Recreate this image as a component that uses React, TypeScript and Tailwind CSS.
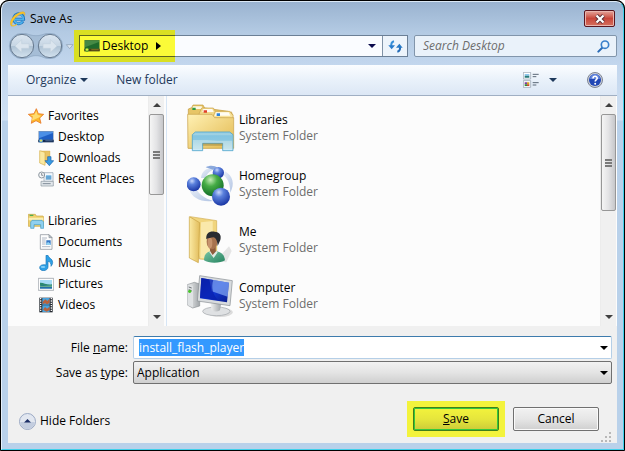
import { useEffect, useRef, type ReactNode } from "react";

function IeIcon() {
  return (
    <svg viewBox="0 0 48 48" className="h-4 w-4 shrink-0">
      <path d="M39 31a15 15 0 1 1 2-6H15" fill="none" stroke="#1f78c2" strokeWidth="9" />
      <path d="M38 31a14 14 0 1 1 2-6H15" fill="none" stroke="#4fb2ec" strokeWidth="5" />
      <path d="M5 46C-6 36 8 12 30 4c12-4 18 0 13 10 1-6-4-7-12-4C17 16 4 33 5 46z" fill="#f9c62c" stroke="#dd9a12" />
      <path d="M4 41c3 7 10 4 17-1C14 45 8 46 4 41z" fill="#f6c22d" stroke="#f6c22d" strokeWidth="2" />
    </svg>
  );
}

function ScreenIcon({ green }: { green?: boolean }) {
  return (
    <svg viewBox="0 0 48 48" className="h-4 w-4 shrink-0">
      <path d="M1 6h46v34H1z" fill={green ? "#5f8a3a" : "#8fa3bb"} />
      <path d="M3 8h42v24H3z" fill={green ? "#1f6a2c" : "#1f5fc4"} />
      <path d="M3 8h42v4L3 28z" fill={green ? "#468a45" : "#4b8fe6"} />
      <path d="M1 32h46v8H1z" fill={green ? "#4d3f14" : "#12294f"} />
      <path d="M22 34h22v3H22z" fill={green ? "#8d7a22" : "#4a6b9a"} />
      <circle cx="9" cy="35" r="6" fill={green ? "#3f9a2a" : "#3d8fe0"} />
      <path d="M9 31v8M5 35h8" stroke={green ? "#e8f04a" : "#e9e25a"} strokeWidth="3" />
    </svg>
  );
}

function StarIcon() {
  return (
    <svg viewBox="0 0 48 48" className="h-4 w-4 shrink-0">
      <path d="M25 2l6 15 16 2-12 11 4 16-15-8-14 8 3-17L1 19l17-2z" fill="#fbb829" stroke="#e8792a" strokeWidth="2.5" strokeLinejoin="round" />
      <path d="M25 9l4 12 11 2-9 6-20 9 4-13-8-4 12-1z" fill="#ffdc70" />
    </svg>
  );
}

function DownloadsIcon() {
  return (
    <svg viewBox="0 0 48 48" className="h-4 w-4 shrink-0">
      <path d="M8 3h28v35H8z" fill="#e9c565" stroke="#cfa544" />
      <path d="M5 2l16 5v39L5 39z" fill="#fae9a0" stroke="#d6b04e" strokeWidth="2" />
      <path d="M29 20h10v12h8L34 47 21 32h8z" fill="#3a9be3" stroke="#1a63ad" strokeWidth="2" />
    </svg>
  );
}

function RecentIcon() {
  return (
    <svg viewBox="0 0 48 48" className="h-4 w-4 shrink-0">
      <path d="M18 5h27v26H18z" fill="#f3f8fc" stroke="#8b9aaa" strokeWidth="2" />
      <path d="M24 12h16v12H24z" fill="#8fc7ee" />
      <path d="M23 18h17M23 24h17" stroke="#3d86bd" strokeWidth="3" />
      <path d="M9 31h37v14H9z" fill="#e2e7eb" stroke="#8a949e" strokeWidth="2" />
      <path d="M14 38h24" stroke="#7e8b97" strokeWidth="3" />
      <circle cx="11" cy="12" r="9" fill="#f4f6f8" stroke="#8d979f" strokeWidth="3" />
      <path d="M11 6v7h5" fill="none" stroke="#56616b" strokeWidth="2" />
    </svg>
  );
}

function LibrarySmallIcon() {
  return (
    <svg viewBox="0 0 48 48" className="h-4 w-4 shrink-0">
      <path d="M1 4h21l3 5h20l2 3v28H1z" fill="#efd06c" stroke="#c9a443" strokeWidth="2" />
      <path d="M5 5h11v4H5z" fill="#4caf50" />
      <path d="M2 14h44v8H2z" fill="#fbeeb0" />
      <path d="M8 27l4-5h30l5 5v19h-9V35H18v11H8z" fill="#8fd0f0" stroke="#3f9ac9" strokeWidth="2" />
    </svg>
  );
}

function DocumentIcon() {
  return (
    <svg viewBox="0 0 48 48" className="h-4 w-4 shrink-0">
      <path d="M7 2h26l9 9v35H7z" fill="#fdfdfd" stroke="#808890" strokeWidth="2" />
      <path d="M33 2v9h9z" fill="#c8d0d8" stroke="#808890" strokeWidth="2" />
      <path d="M12 12h15M12 18h11M12 24h11M12 30h11M12 38h25" stroke="#8b98ab" strokeWidth="2" />
      <path d="M25 19h13v14H25z" fill="#3578c6" />
      <path d="M25 28l6-4 7 6v3H25z" fill="#8ed0f2" />
    </svg>
  );
}

function MusicIcon() {
  return (
    <svg viewBox="0 0 48 48" className="h-4 w-4 shrink-0">
      <path d="M24 1h6c1 9 14 9 14 21 0 6-3 9-5 12 1-9-3-14-9-15v17c0 6-6 11-13 11-7 0-12-4-12-9 0-7 9-11 19-8z" fill="#2da0e6" stroke="#1876b8" strokeWidth="2" />
      <ellipse cx="15" cy="36" rx="7" ry="3" fill="#85d0fa" />
    </svg>
  );
}

function PictureIcon() {
  return (
    <svg viewBox="0 0 48 48" className="h-4 w-4 shrink-0">
      <path d="M1 7h46v36H1z" fill="#fdfdfd" stroke="#8a9198" strokeWidth="2" />
      <path d="M6 12h36v26H6z" fill="#a6dbf5" />
      <path d="M6 20c11-1 20 8 36 5v5H6z" fill="#2c8a70" />
      <path d="M6 29h36v9H6z" fill="#2470a8" />
      <path d="M6 29c12 3 24-1 36 0v3H6z" fill="#79bd82" />
    </svg>
  );
}

function VideoIcon() {
  return (
    <svg viewBox="0 0 48 48" className="h-4 w-4 shrink-0">
      <path d="M4 2h40v44H4z" fill="#252a31" />
      <path d="M8 3v42M40 3v42" stroke="#f4f4f4" strokeWidth="4" strokeDasharray="4 3" />
      <path d="M13 3h22v20H13zM13 25h22v20H13z" fill="#4ba4de" />
      <path d="M14 14l8-7 6 5 7-7v13l-8 4-6-3-7 3zM15 38l6-8 6 5 8-6v10l-9 5z" fill="#b8623c" />
    </svg>
  );
}

function LibrariesIcon() {
  return (
    <svg viewBox="0 0 144 144" className="h-12 w-12 shrink-0">
      <defs>
        <linearGradient id="folder" x1="0" y1="0" x2="1" y2="1">
          <stop offset="0" stopColor="#fff1b4" />
          <stop offset="1" stopColor="#e2b84e" />
        </linearGradient>
        <linearGradient id="stand" x1="0" y1="0" x2="0" y2="1">
          <stop offset="0" stopColor="#8fcdea" />
          <stop offset="1" stopColor="#cbeaf8" />
        </linearGradient>
      </defs>
      <path d="M4 132V15l10-4 4-8h30l5 9 70 10 14 8v102z" fill="#e7c566" stroke="#c39a3e" strokeWidth="2" />
      <path d="M18 7h26l4 8H16z" fill="#fdf8e2" />
      <path d="M16 11h10v7H16z" fill="#2d9a40" />
      <path d="M36 30l8-18h35l7 12h48v20H36z" fill="#f2d98a" stroke="#c8a14a" strokeWidth="2" />
      <path d="M49 15h27l4 9H46z" fill="#fffaf0" />
      <path d="M50 19h10v7H50z" fill="#e0402a" />
      <path d="M76 42l9-20h43l10 12v10z" fill="#f7e29a" stroke="#c8a14a" strokeWidth="2" />
      <path d="M87 25h38l5 10H83z" fill="#fffdf5" />
      <path d="M89 28h10v8H89z" fill="#2f84d8" />
      <path d="M2 31h73l8 10h57v92H3z" fill="url(#folder)" stroke="#c8a14a" strokeWidth="2" />
      <path d="M16 92l9-8h103l10 8v48h-31v-22H47v22H16z" fill="url(#stand)" fillOpacity=".92" stroke="#4fa5cb" strokeWidth="2.5" />
      <path d="M18 94h118v16H90L60 108H18z" fill="#6bb9df" opacity=".55" />
      <path d="M47 118h60v7H47z" fill="#8a7a3c" opacity=".45" />
    </svg>
  );
}

function HomegroupIcon() {
  return (
    <svg viewBox="0 0 144 144" className="h-12 w-12 shrink-0">
      <defs>
        <radialGradient id="blueBall" cx=".38" cy=".26" r=".75">
          <stop offset="0" stopColor="#c9d8fb" />
          <stop offset=".35" stopColor="#5a80dc" />
          <stop offset="1" stopColor="#1a36a4" />
        </radialGradient>
        <radialGradient id="greenBall" cx=".4" cy=".25" r=".75">
          <stop offset="0" stopColor="#c4ecb6" />
          <stop offset=".4" stopColor="#45ac45" />
          <stop offset="1" stopColor="#126c28" />
        </radialGradient>
        <linearGradient id="trail" x1="0" y1="0" x2="1" y2="1">
          <stop offset="0" stopColor="#e9eff8" />
          <stop offset="1" stopColor="#b3c5e4" />
        </linearGradient>
      </defs>
      <path d="M7 90c8 22 34 38 71 33-26-8-43-20-50-38z" fill="url(#trail)" />
      <path d="M114 34c24 14 30 38 16 64-1-22-4-38-20-52z" fill="url(#trail)" />
      <path d="M42 54C44 32 60 20 92 24 72 30 60 38 56 54z" fill="url(#trail)" />
      <path d="M56 22C70 14 84 17 92 24l-14 5z" fill="#8ba9dc" />
      <circle cx="94" cy="38" r="17" fill="url(#blueBall)" />
      <circle cx="20" cy="73" r="21" fill="url(#blueBall)" />
      <circle cx="77" cy="76" r="33" fill="url(#greenBall)" />
      <circle cx="102" cy="110" r="27" fill="url(#blueBall)" />
    </svg>
  );
}

function UserFolderIcon() {
  return (
    <svg viewBox="0 0 144 144" className="h-12 w-12 shrink-0">
      <defs>
        <linearGradient id="flap" x1="0" y1="0" x2="1" y2="0">
          <stop offset="0" stopColor="#fbeaa4" />
          <stop offset="1" stopColor="#e2bd5c" />
        </linearGradient>
        <linearGradient id="shirt" x1="0" y1="0" x2="1" y2="1">
          <stop offset="0" stopColor="#79c5a6" />
          <stop offset="1" stopColor="#25835f" />
        </linearGradient>
      </defs>
      <path d="M84 136l42-45 8 14-16 34z" fill="#d6d6d6" opacity=".6" />
      <path d="M10 2l79 12v119l-52-4z" fill="#f1d57d" stroke="#d2ae52" strokeWidth="2" />
      <path d="M42 19l35-4v112H40z" fill="#fae9ab" />
      <path d="M7 2l31 18-4 120-27-14z" fill="url(#flap)" stroke="#c9a143" strokeWidth="2" />
      <path d="M51 133c0-18 8-26 24-28 24-1 37 8 39 28-12 9-50 10-63 0z" fill="url(#shirt)" />
      <path d="M68 92l2 20 8 10 9-10-1-20z" fill="#8f5c3c" />
      <path d="M69 105l8 12 11-12 4 4-12 17-13-17z" fill="#dfeae4" />
      <ellipse cx="75" cy="77" rx="16" ry="23" fill="#a8734e" />
      <ellipse cx="69" cy="81" rx="7" ry="16" fill="#d3a17a" opacity=".7" />
      <path d="M58 70c-2-17 8-25 25-23 15 1 21 11 17 25l-8 18c-1-12-3-22-12-26-9 2-16 1-22 6z" fill="#2a2c31" />
    </svg>
  );
}

function ComputerIcon() {
  return (
    <svg viewBox="0 0 144 144" className="h-12 w-12 shrink-0">
      <defs>
        <linearGradient id="screen" x1="0" y1="0" x2="1" y2="1">
          <stop offset="0" stopColor="#0a1f9e" />
          <stop offset=".5" stopColor="#1038d6" />
          <stop offset="1" stopColor="#0a1d8c" />
        </linearGradient>
        <linearGradient id="metal" x1="0" y1="0" x2="1" y2="0">
          <stop offset="0" stopColor="#f3f3f3" />
          <stop offset="1" stopColor="#9fa4a8" />
        </linearGradient>
      </defs>
      <path d="M1 38l21-7 16 5v66l-21 6-16-9z" fill="url(#metal)" stroke="#8c9196" strokeWidth="2" />
      <path d="M2 38l16 4v64L2 99z" fill="#dfe2e4" />
      <path d="M5 45l9 3M5 53l9 3" stroke="#6d7275" strokeWidth="3" />
      <circle cx="8" cy="58" r="5" fill="#49c32c" />
      <ellipse cx="99" cy="121" rx="38" ry="14" fill="#bcbcbc" opacity=".5" />
      <ellipse cx="88" cy="118" rx="41" ry="13" fill="#dfe1e3" stroke="#a0a5a9" strokeWidth="2" />
      <path d="M70 91h33l-4 24c-8 5-18 5-25 0z" fill="url(#metal)" />
      <path d="M38 11l98 15-7 75-98-14z" fill="#d8dbde" stroke="#878c91" strokeWidth="2" />
      <path d="M43 18l83 14-6 59-81-12z" fill="url(#screen)" />
      <path d="M67 22l59 10-4 42-48-16z" fill="#85a9f4" opacity=".7" />
      <path d="M43 18l36 6c-8 23 0 46 14 61l-54-8z" fill="#0920ad" opacity=".7" />
    </svg>
  );
}

const SIDEBAR = [
  {
    label: "Favorites",
    icon: <StarIcon />,
    items: [
      { label: "Desktop", icon: <ScreenIcon /> },
      { label: "Downloads", icon: <DownloadsIcon /> },
      { label: "Recent Places", icon: <RecentIcon /> },
    ],
  },
  {
    label: "Libraries",
    icon: <LibrarySmallIcon />,
    items: [
      { label: "Documents", icon: <DocumentIcon /> },
      { label: "Music", icon: <MusicIcon /> },
      { label: "Pictures", icon: <PictureIcon /> },
      { label: "Videos", icon: <VideoIcon /> },
    ],
  },
];

const FOLDERS = [
  { name: "Libraries", icon: <LibrariesIcon /> },
  { name: "Homegroup", icon: <HomegroupIcon /> },
  { name: "Me", icon: <UserFolderIcon /> },
  { name: "Computer", icon: <ComputerIcon /> },
];

function Caret({ className = "" }: { className?: string }) {
  return (
    <svg viewBox="0 0 8 4" className={`h-1 w-2 shrink-0 ${className}`}>
      <path d="M0 0h8L4 4z" fill="currentColor" />
    </svg>
  );
}

function Scrollbar({ thumb }: { thumb: string }) {
  return (
    <div className="flex w-4 shrink-0 flex-col items-center border-l border-[#ececec] bg-[#f0f0f0] text-[#404040]">
      <button aria-label="Scroll up" className="flex h-[18px] w-full shrink-0 items-center justify-center">
        <Caret className="rotate-180" />
      </button>
      <div className="min-h-0 w-full flex-1">
        <div className={`flex w-full flex-col items-center justify-center gap-px rounded-xs border border-[#979797] bg-linear-to-r from-[#f5f5f5] via-[#e3e3e5] to-[#c6c7ca] ${thumb}`}>
          <span className="h-0.5 w-[7px] bg-[#7a7a7a]" />
          <span className="h-0.5 w-[7px] bg-[#7a7a7a]" />
          <span className="h-0.5 w-[7px] bg-[#7a7a7a]" />
        </div>
      </div>
      <button aria-label="Scroll down" className="flex h-[18px] w-full shrink-0 items-center justify-center">
        <Caret />
      </button>
    </div>
  );
}

function TitleBar() {
  return (
    <header className="flex h-[25px] items-end justify-between px-0.5">
      <div className="flex items-center gap-1">
        <IeIcon />
        <h1>Save As</h1>
      </div>
      <button
        aria-label="Close"
        className="flex h-[17px] w-[31px] items-center justify-center rounded-xs border border-[#5b1620] bg-linear-to-b from-[#e3a49c] via-[#c8453a] via-50% to-[#d5705f] shadow-[inset_0_0_0_1px_#e9b5ae]"
      >
        <svg viewBox="0 0 12 10" className="h-2.5 w-3">
          <path d="M2.5 1.5l7 7m0-7l-7 7" stroke="#5b3038" strokeWidth="4" />
          <path d="M2.5 1.5l7 7m0-7l-7 7" stroke="#fff" strokeWidth="2.2" />
        </svg>
      </button>
    </header>
  );
}

function NavButtons() {
  return (
    <div className="flex w-[71px] shrink-0 items-center">
      <svg viewBox="0 0 198 78" className="h-[26px] w-[66px]">
        <defs>
          <linearGradient id="orb" x1="0" y1="0" x2="0" y2="1">
            <stop offset="0" stopColor="#dce7f1" />
            <stop offset=".48" stopColor="#c7d6e4" />
            <stop offset=".5" stopColor="#aec2d4" />
            <stop offset="1" stopColor="#d3e2ee" />
          </linearGradient>
        </defs>
        <path d="M42 1c20 0 22 7 42 7s22-7 42-7a38 38 0 0 1 0 76c-20 0-22-9-42-9s-22 9-42 9a38 38 0 0 1 0-76z" fill="#a5bdd6" stroke="#8ba4bf" strokeWidth="2" />
        <circle cx="42" cy="39" r="35" fill="url(#orb)" stroke="#65788e" strokeWidth="3" />
        <circle cx="126" cy="39" r="35" fill="url(#orb)" stroke="#65788e" strokeWidth="3" />
        <path d="M21 39l20-19v12h22v14H41v12z" fill="#dbe5ee" stroke="#c3d1de" strokeWidth="2" />
        <path d="M147 39l-20-19v12h-22v14h22v12z" fill="#dbe5ee" stroke="#c3d1de" strokeWidth="2" />
        <path d="M175 35h20l-10 12z" fill="#dce6f0" stroke="#8799ad" strokeWidth="2" />
      </svg>
    </div>
  );
}

function AddressBar() {
  return (
    <div className="flex h-[38px] items-center gap-1.5">
      <div className="flex min-w-0 flex-1 items-center">
        <NavButtons />
        <div className="relative flex h-[22px] min-w-0 flex-1 items-stretch border border-[#6b7f96] bg-[#fafcff]">
          <div className="absolute -top-1.5 -bottom-1.5 -left-1.5 w-[101px] bg-[#d9df22]" />
          <button className="relative -my-px -ml-px flex w-24 items-center gap-0.5 border-y border-l border-[#5d6420] bg-[#fbfb38] pl-1">
            <ScreenIcon green />
            <span>Desktop</span>
            <svg viewBox="0 0 5 8" className="ml-1.5 h-2 w-[5px]">
              <path d="M0 0l5 4-5 4z" fill="#000" />
            </svg>
          </button>
          <button aria-label="Previous locations" className="ml-auto flex w-5 items-center justify-center text-[#0b0b4d]">
            <Caret />
          </button>
          <button aria-label="Refresh" className="flex w-[25px] items-center justify-center border-l border-[#8092a6] bg-[#edf4fb]">
            <svg viewBox="0 0 45 39" className="h-[13px] w-[15px]">
              <path d="M18 4C10 6 9 12 10 20" fill="none" stroke="#378fd8" strokeWidth="6" />
              <path d="M1 16h20L11 28z" fill="#287bcb" />
              <path d="M28 35c8-2 9-8 8-16" fill="none" stroke="#246bb6" strokeWidth="6" />
              <path d="M24 23h20L34 11z" fill="#2678c5" />
            </svg>
          </button>
        </div>
      </div>
      <label className="flex h-[22px] w-1/3 shrink-0 items-center rounded-xs border border-[#8195ab] bg-[#eaf2fa] pr-1.5 pl-2">
        <input
          type="search"
          aria-label="Search Desktop"
          placeholder="Search Desktop"
          className="min-w-0 flex-1 bg-transparent italic outline-none placeholder:text-[#6d6d6d]"
        />
        <svg viewBox="0 0 39 39" className="h-[13px] w-[13px]">
          <path d="M4 35l14-14" stroke="#2a6bb5" strokeWidth="6" strokeLinecap="round" />
          <circle cx="24" cy="14" r="11" fill="#e9f4fd" stroke="#3a80cb" strokeWidth="5" />
        </svg>
      </label>
    </div>
  );
}

function Toolbar() {
  return (
    <div className="flex h-[31px] items-center border-b border-[#a0afc3] bg-linear-to-b from-[#fbfdff] via-[#e9f1fa] via-50% to-[#dce7f5] pr-3.5 pl-[18px] text-[#1e395b]">
      <button className="flex items-center gap-1">
        Organize
        <Caret />
      </button>
      <button className="ml-7">New folder</button>
      <button aria-label="Change your view" className="ml-auto flex items-center gap-2.5">
        <svg viewBox="0 0 48 48" className="h-4 w-4">
          <path d="M1 1h22v20H1zM1 26h22v20H1z" fill="#fff" stroke="#8b97a6" strokeWidth="2" />
          <path d="M5 6h14v5H5z" fill="#8ec8ee" />
          <path d="M5 11h14v6H5z" fill="#267a7a" />
          <path d="M5 31h7v6H5z" fill="#7b3fa0" />
          <path d="M12 31h7v6h-7z" fill="#d9a520" />
          <path d="M5 37h7v5H5z" fill="#2f8a3a" />
          <path d="M12 37h7v5h-7z" fill="#c9482e" />
          <path d="M29 7h18M29 14h11M29 32h18M29 39h11" stroke="#5b6876" strokeWidth="3" />
        </svg>
        <Caret />
      </button>
      <button aria-label="Help" className="ml-[30px]">
        <svg viewBox="0 0 16 16" className="h-4 w-4">
          <circle cx="8" cy="8" r="7.5" fill="#c9ced8" stroke="#7d8493" />
          <circle cx="8" cy="8" r="6" fill="#2147b5" />
          <path d="M3 7a5 5 0 0 1 10 0z" fill="#5f83dd" />
          <path d="M6 6.4C6 3.6 10.3 3.7 10.2 6.2 10.1 7.6 8.2 7.6 8.2 9.6" fill="none" stroke="#fff" strokeWidth="1.6" />
          <circle cx="8.2" cy="11.8" r="1" fill="#fff" />
        </svg>
      </button>
    </div>
  );
}

function Sidebar() {
  return (
    <nav className="flex w-[159px] shrink-0 border-r border-[#d6e5f5]">
      <div className="flex min-w-0 flex-1 flex-col gap-[21px] pt-[9px] pl-5">
        {SIDEBAR.map((group) => (
          <div key={group.label}>
            <a href="#" className="flex h-[21px] items-center gap-1">
              {group.icon}
              {group.label}
            </a>
            <ul className="pl-2.5">
              {group.items.map((item) => (
                <li key={item.label}>
                  <a href="#" className="flex h-[21px] items-center gap-1 whitespace-nowrap">
                    {item.icon}
                    {item.label}
                  </a>
                </li>
              ))}
            </ul>
          </div>
        ))}
      </div>
      <Scrollbar thumb="h-[42%]" />
      <div className="w-0.5" />
    </nav>
  );
}

function FileList() {
  return (
    <div className="flex min-w-0 flex-1">
      <ul className="min-w-0 flex-1 pt-1 pl-5">
        {FOLDERS.map((folder) => (
          <li key={folder.name} className="flex h-14 items-center gap-1">
            {folder.icon}
            <div>
              <div>{folder.name}</div>
              <div className="text-[#6d6d6d]">System Folder</div>
            </div>
          </li>
        ))}
      </ul>
      <Scrollbar thumb="h-1/2" />
      <div className="w-px" />
    </div>
  );
}

function Field({ id, label, children }: { id: string; label: ReactNode; children: ReactNode }) {
  return (
    <div className="flex items-center gap-[5px]">
      <label htmlFor={id} className="w-28 shrink-0 text-right">
        {label}
      </label>
      <div className="relative flex-1">
        {children}
        <Caret className="pointer-events-none absolute top-2.5 right-1" />
      </div>
    </div>
  );
}

function FileForm() {
  const nameRef = useRef<HTMLInputElement>(null);

  // Start with the suggested name selected so typing replaces it
  useEffect(() => {
    nameRef.current?.focus();
    nameRef.current?.select();
  }, []);

  return (
    <form className="bg-[#f0f0f0] pt-2.5 pr-[5px] pl-2" onSubmit={(e) => e.preventDefault()}>
      <div className="flex flex-col gap-0.5">
        <Field id="file-name" label={<>File <u>n</u>ame:</>}>
          <input
            id="file-name"
            ref={nameRef}
            defaultValue="install_flash_player"
            className="block h-[23px] w-full rounded-xs border border-[#b5cfe7] border-t-[#3d7bad] bg-white pr-5 pl-[5px] outline-none selection:bg-[#3399ff] selection:text-white"
          />
        </Field>
        <Field id="file-type" label={<>Save as <u>t</u>ype:</>}>
          <select
            id="file-type"
            className="block h-[23px] w-full appearance-none rounded-xs border border-[#707070] bg-linear-to-b from-[#f2f2f2] via-[#e4e4e4] to-[#cfcfcf] pr-5 pl-[3px] outline-none"
          >
            <option>Application</option>
          </select>
        </Field>
      </div>
      <div className="mt-[17px] flex items-center justify-between pb-1.5 pl-[3px]">
        <button type="button" className="mt-1 flex items-center gap-1">
          <svg viewBox="0 0 17 17" className="h-[17px] w-[17px]">
            <circle cx="8.5" cy="8.5" r="8" fill="#e2e7f0" stroke="#9ba9c4" />
            <path d="M1.5 9h14a7 7 0 0 1-14 0z" fill="#c3cddf" />
            <path d="M5 9.5l3.5-3.5 3.5 3.5z" fill="#1c2f66" />
          </svg>
          Hide Folders
        </button>
        <div className="mr-[13px] flex items-center gap-2">
          <div className="bg-[#f3f33c] p-1.5">
            <button
              type="submit"
              className="h-6 w-[86px] rounded-xs border border-[#3f7f1c] bg-linear-to-b from-[#f3f33c] via-[#e6e63c] via-50% to-[#cccb38] shadow-[inset_0_0_0_1px_#35c93a]"
            >
              <u>S</u>ave
            </button>
          </div>
          <button
            type="button"
            className="h-6 w-[86px] rounded-xs border border-[#707070] bg-linear-to-b from-[#f2f2f2] via-[#e6e6e6] via-50% to-[#cfcfcf] shadow-[inset_0_0_0_1px_#fafafa]"
          >
            Cancel
          </button>
        </div>
      </div>
      <div className="-mt-3 flex justify-end">
        <svg viewBox="0 0 12 12" className="h-3 w-3">
          <path d="M9 1h2v2H9zM5 5h2v2H5zM9 5h2v2H9zM1 9h2v2H1zM5 9h2v2H5zM9 9h2v2H9z" fill="#b8b8b8" />
        </svg>
      </div>
    </form>
  );
}

export default function App() {
  return (
    <main className="bg-white font-['Open_Sans','Noto_Sans',sans-serif] text-xs text-black">
      <div className="overflow-hidden rounded-t-lg border border-black bg-black">
        <div className="rounded-t-lg border border-t-[#dbe8f5] border-r-[#3fd0ea] border-b-[#3fd0ea] border-l-[#e6f0fa] bg-[linear-gradient(#9ab3d0_0px,#b3cae3_30px,#c3d7ee_64px,#cfe0f3_118px,#b9d1ea_119px)] px-1.5 pb-1.5">
          <TitleBar />
          <AddressBar />
          <div>
            <Toolbar />
            <div className="flex h-[230px] bg-[#fcfcfc]">
              <Sidebar />
              <FileList />
            </div>
            <FileForm />
          </div>
        </div>
      </div>
    </main>
  );
}
